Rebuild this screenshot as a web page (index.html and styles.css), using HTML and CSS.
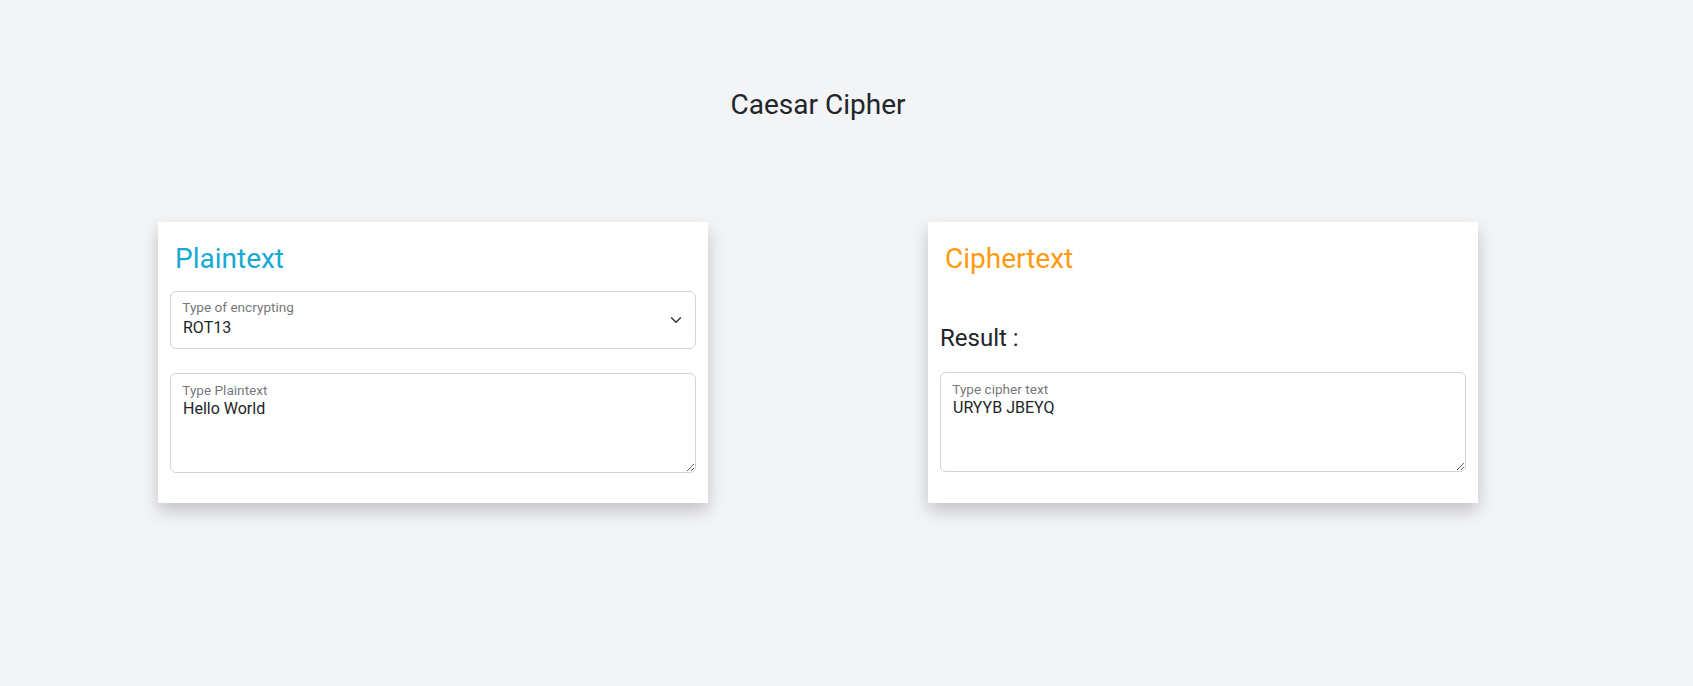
FILE: index.html
```html
<!DOCTYPE html>
<html lang="en">
<head>
<meta charset="utf-8">
<title>Caesar Cipher</title>
<link rel="stylesheet" href="styles.css">
</head>
<body>
<div class="page">
  <h1 class="page-title">Caesar Cipher</h1>
  <div class="cards">
    <section class="card">
      <h3 class="card-title plain">Plaintext</h3>
      <div class="floating select-wrap">
        <select class="control select">
          <option>ROT13</option>
          <option>Caesar</option>
        </select>
        <label class="float-label">Type of encrypting</label>
        <svg class="chevron" viewBox="0 0 16 16" width="16" height="12" aria-hidden="true">
          <path d="m2 5 6 6 6-6" fill="none" stroke="#343a40" stroke-width="2" stroke-linecap="round" stroke-linejoin="round"/>
        </svg>
      </div>
      <div class="floating area-wrap">
        <textarea class="control area">Hello World</textarea>
        <label class="float-label">Type Plaintext</label>
      </div>
    </section>
    <section class="card">
      <h3 class="card-title cipher">Ciphertext</h3>
      <h4 class="result">Result :</h4>
      <div class="floating area-wrap cipher-area">
        <textarea class="control area">URYYB JBEYQ</textarea>
        <label class="float-label">Type cipher text</label>
      </div>
    </section>
  </div>
</div>
</body>
</html>
```

FILE: styles.css
```css
* { box-sizing: border-box; }

html {
  background: #f3f4f6;
}

body {
  margin: 0;
  padding: 0;
  min-height: 686px;
  font-family: Roboto, "Liberation Sans", Arial, sans-serif;
  color: #212529;
}

.page {
  width: 1636px;
  padding-top: 88px;
  padding-bottom: 60px;
}

.page-title {
  margin: 0;
  font-size: 28px;
  font-weight: 400;
  line-height: 1.2;
  text-align: center;
}

.cards {
  display: flex;
  gap: 220px;
  padding: 0 158px;
  margin-top: 100px;
}

.card {
  flex: 1;
  display: flex;
  flex-direction: column;
  background: #fff;
  padding: 20px 12px 30px;
  box-shadow: 0 8px 16px rgba(0, 0, 0, 0.2);
}

.card-title {
  margin: 0 0 16px 5px;
  font-size: 28px;
  font-weight: 400;
  line-height: 1.2;
}

.plain { color: #17a9d2; }
.cipher { color: #ff9a0e; }

.result {
  margin: 33px 0 19px;
  font-size: 24px;
  font-weight: 400;
  line-height: 1.2;
}

.floating {
  position: relative;
}

.control {
  display: block;
  width: 100%;
  font: inherit;
  font-size: 16px;
  line-height: 1.5;
  color: #212529;
  background: #fff;
  border: 1px solid #ced4da;
  border-radius: 6px;
  outline: none;
}

.select {
  height: 58px;
  padding: 24px 36px 8px 12px;
  appearance: none;
  -webkit-appearance: none;
}

.area {
  height: 100px;
  padding: 23px 12px 8px;
  resize: vertical;
}

.area-wrap {
  margin-top: 24px;
}

.cipher-area {
  margin-top: 0;
}

.float-label {
  position: absolute;
  top: 0;
  left: 0;
  padding: 16px 12px;
  font-size: 16px;
  line-height: 1.5;
  color: rgba(33, 37, 41, 0.65);
  transform-origin: 0 0;
  transform: scale(0.85) translateY(-8px) translateX(2.4px);
  pointer-events: none;
  white-space: nowrap;
}

.area-wrap .float-label {
  transform: scale(0.85) translateY(-7px) translateX(2.4px);
}

.chevron {
  position: absolute;
  right: 12px;
  top: 23px;
  pointer-events: none;
}
```
